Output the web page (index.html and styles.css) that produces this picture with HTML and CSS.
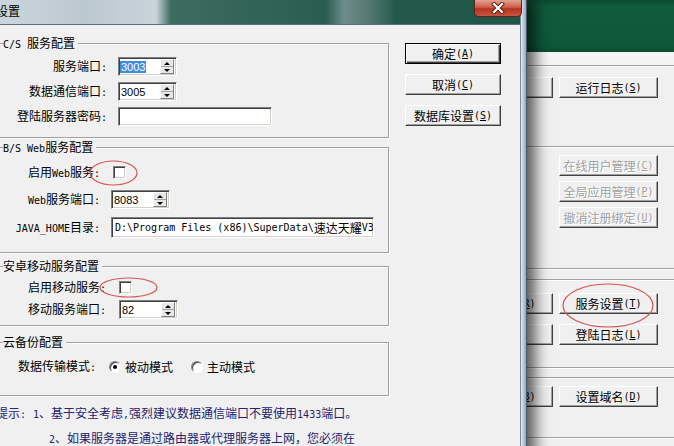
FILE: index.html
```html
<!DOCTYPE html>
<html lang="zh-CN">
<head>
    <meta charset="UTF-8">
    <meta name="viewport" content="width=device-width, initial-scale=1.0">
    <title>设置</title>
    <link rel="stylesheet" href="styles.css">
</head>
<body>
    <!-- main window, mostly hidden behind the dialog -->
    <div class="main-window">
        <div class="main-header"></div>
        <div class="main-strip"></div>

        <div class="panel panel-run">
            <div class="btn-row">
                <div class="btn btn-left">启动<span class="en">(<u>R</u>)</span></div>
                <div class="btn">运行日志<span class="en">(<u>S</u>)</span></div>
            </div>
        </div>

        <div class="panel panel-admin">
            <div class="btn-stack">
                <div class="btn disabled">在线用户管理<span class="en">(<u>C</u>)</span></div>
                <div class="btn disabled">全局应用管理<span class="en">(<u>P</u>)</span></div>
                <div class="btn disabled">撤消注册绑定<span class="en">(<u>U</u>)</span></div>
            </div>
        </div>

        <div class="panel panel-service">
            <div class="btn-col">
                <div class="btn-row">
                    <div class="btn btn-left">启动服务<span class="en">(<u>R</u>)</span></div>
                    <div class="btn">服务设置<span class="en">(<u>T</u>)</span></div>
                </div>
                <div class="btn-row">
                    <div class="btn btn-left">备份<span class="en">(<u>K</u>)</span></div>
                    <div class="btn">登陆日志<span class="en">(<u>L</u>)</span></div>
                </div>
            </div>
        </div>

        <div class="panel panel-domain">
            <div class="btn-row">
                <div class="btn btn-left">数据备份<span class="en">(<u>B</u>)</span></div>
                <div class="btn">设置域名<span class="en">(<u>D</u>)</span></div>
            </div>
        </div>
    </div>

    <!-- settings dialog -->
    <div class="dialog">
        <div class="dialog-main">
            <div class="titlebar">
                <span class="title">设置</span>
                <div class="close-btn">
                    <svg width="14" height="12" viewBox="0 0 14 12">
                        <path d="M3 2 L11 10 M11 2 L3 10" stroke="#5a1a10" stroke-width="4" stroke-linecap="square"/>
                        <path d="M3 2 L11 10 M11 2 L3 10" stroke="#fff" stroke-width="2.2" stroke-linecap="square"/>
                    </svg>
                </div>
            </div>

            <div class="client">
                <div class="settings">
                    <div class="group group-cs">
                        <div class="group-title"><span class="en">C/S </span>服务配置</div>
                        <div class="row">
                            <span class="label">服务端口<span class="en">:</span></span>
                            <span class="field field-port"><span class="sel">3003</span><span class="spin"><i class="up"></i><i class="down"></i></span></span>
                        </div>
                        <div class="row">
                            <span class="label">数据通信端口<span class="en">:</span></span>
                            <span class="field field-port">3005<span class="spin"><i class="up"></i><i class="down"></i></span></span>
                        </div>
                        <div class="row">
                            <span class="label">登陆服务器密码<span class="en">:</span></span>
                            <span class="field field-pass"></span>
                        </div>
                    </div>

                    <div class="group group-bs">
                        <div class="group-title"><span class="en">B/S Web</span>服务配置</div>
                        <div class="row row-check">
                            <span class="label">启用<span class="en">Web</span>服务<span class="en">:</span></span>
                            <span class="checkbox"></span>
                        </div>
                        <div class="row">
                            <span class="label"><span class="en">Web</span>服务端口<span class="en">:</span></span>
                            <span class="field field-port">8083<span class="spin"><i class="up"></i><i class="down"></i></span></span>
                        </div>
                        <div class="row">
                            <span class="label"><span class="en">JAVA_HOME</span>目录<span class="en">:</span></span>
                            <span class="field field-path"><span class="en">D:\Program Files (x86)\SuperData\</span>速达天耀<span class="en">V3</span></span>
                        </div>
                    </div>

                    <div class="group group-mobile">
                        <div class="group-title">安卓移动服务配置</div>
                        <div class="row row-check">
                            <span class="label">启用移动服务<span class="en">:</span></span>
                            <span class="checkbox"></span>
                        </div>
                        <div class="row">
                            <span class="label">移动服务端口<span class="en">:</span></span>
                            <span class="field field-port">82<span class="spin"><i class="up"></i><i class="down"></i></span></span>
                        </div>
                    </div>

                    <div class="group group-cloud">
                        <div class="group-title">云备份配置</div>
                        <div class="row row-radio">
                            <span class="label">数据传输模式<span class="en">:</span></span>
                            <span class="radio checked"></span><span class="radio-text">被动模式</span>
                            <span class="radio"></span><span class="radio-text">主动模式</span>
                        </div>
                    </div>

                    <div class="hint">
                        <div class="hint-row">
                            <span class="hint-label">提示<span class="en">:</span></span>
                            <span><span class="en">1</span>、基于安全考虑<span class="en">,</span>强烈建议数据通信端口不要使用<span class="en">1433</span>端口。</span>
                        </div>
                        <div class="hint-more">
                            <div><span class="en">2</span>、如果服务器是通过路由器或代理服务器上网，您必须在</div>
                            <div>路由器或代理服务器上开放以上服务端口。</div>
                        </div>
                    </div>
                </div>

                <div class="actions">
                    <div class="btn btn-default">确定<span class="en">(<u>A</u>)</span></div>
                    <div class="btn">取消<span class="en">(<u>C</u>)</span></div>
                    <div class="btn">数据库设置<span class="en">(<u>S</u>)</span></div>
                </div>
            </div>
        </div>
        <div class="frame"></div>
    </div>

    <!-- red marks drawn over the screenshot -->
    <svg class="marks" width="674" height="446" viewBox="0 0 674 446">
        <ellipse cx="113.5" cy="173" rx="23.5" ry="12" />
        <ellipse cx="128.5" cy="287.5" rx="28.5" ry="9.5" />
        <ellipse cx="608" cy="305.5" rx="45" ry="21.5" />
    </svg>
</body>
</html>
```

FILE: styles.css
```css
/* Classic Windows look: settings dialog over the server main window */
* {
    box-sizing: border-box;
}
body {
    margin: 0;
    width: 674px;
    height: 446px;
    overflow: hidden;
    position: relative;
    background-color: #f0f0f0;
    font-family: "Noto Sans CJK SC", sans-serif;
    font-size: 12px;
    color: #000;
}
.en {
    font-family: "DejaVu Sans Mono", monospace;
    font-size: 10px;
}
u {
    text-underline-offset: 1px;
}

/* --- main window --- */
.main-window {
    position: absolute;
    left: 400px;
    top: 0;
    width: 280px;
    height: 446px;
    display: flex;
    flex-direction: column;
    background-color: #f0f0f0;
}
.main-header {
    flex: none;
    height: 52px;
    background: linear-gradient(#0a4a30, #0f5b3b 12%, #0e593a 85%, #0b4c31);
}
.main-strip {
    flex: none;
    height: 14px;
    background-color: #f4f4f4;
    border-bottom: 1px solid #a0a0a0;
    box-shadow: 0 1px 0 #fff;
}
.panel {
    flex: none;
    border-bottom: 1px solid #a0a0a0;
    box-shadow: 0 1px 0 #fff;
}
.panel-run {
    height: 81px;
    padding-top: 11px;
}
.panel-admin {
    height: 122px;
    padding-top: 8px;
}
.panel-service {
    margin-top: 10px;
    height: 89px;
    padding-top: 13px;
    border-top: 1px solid #a0a0a0;
    box-shadow: inset 0 1px 0 #fff, 0 1px 0 #fff;
}
.panel-domain {
    margin-top: 9px;
    height: 61px;
    padding-top: 8px;
    border-top: 1px solid #a0a0a0;
    box-shadow: inset 0 1px 0 #fff, 0 1px 0 #fff;
}

/* --- buttons --- */
.btn {
    height: 21px;
    display: flex;
    align-items: center;
    justify-content: center;
    white-space: nowrap;
    line-height: 14px;
    background-color: #f0f0f0;
    border: 1px solid;
    border-color: #fff #404040 #404040 #fff;
    box-shadow: inset -1px -1px 0 #a0a0a0;
}
.btn.disabled {
    color: #a0a0a0;
    text-shadow: 1px 1px 0 #fff;
}
.btn-default {
    border-color: #000;
    box-shadow: inset 1px 1px 0 #fff, inset -1px -1px 0 #404040, inset -2px -2px 0 #a0a0a0;
}
.btn-row {
    display: flex;
    gap: 6px;
    padding-left: 52px;
}
.btn-row .btn {
    width: 99px;
}
.btn-row .btn-left {
    width: 101px;
}
.btn-stack {
    display: flex;
    flex-direction: column;
    gap: 5px;
    padding-left: 159px;
}
.btn-stack .btn {
    width: 99px;
}
.btn-col {
    display: flex;
    flex-direction: column;
    gap: 10px;
}

/* --- dialog --- */
.dialog {
    position: absolute;
    left: -14px;
    top: 0;
    width: 541px;
    height: 470px;
    display: flex;
    z-index: 1;
    box-shadow: 6px 0 14px 2px rgba(0, 0, 0, 0.65);
}
.dialog-main {
    flex: 1;
    display: flex;
    flex-direction: column;
}
.frame {
    flex: none;
    width: 7px;
    background: linear-gradient(to right, #e2e9f0, #b3c5d7 55%, #91a7be);
    border-left: 1px solid #7d8c99;
    border-right: 1px solid #4d5b68;
}
.titlebar {
    flex: none;
    height: 25px;
    display: flex;
    align-items: flex-start;
    border-bottom: 1px solid #5f6e79;
    background: linear-gradient(to right, #cdd7de 0, #bcc8d0 100px, #c9d3da 170px, #3d6b60 185px, #2a5d50 340px, #6e8d8b 358px, #587b76 380px, #24594b 410px, #1f5647 100%);
}
.title {
    padding: 4px 0 0 10px;
    line-height: 14px;
}
.close-btn {
    margin-left: auto;
    margin-right: -2px;
    position: relative;
    z-index: 2;
    width: 48px;
    height: 17px;
    display: flex;
    align-items: center;
    justify-content: center;
    border: 1px solid #5b2218;
    border-top: none;
    border-radius: 0 0 5px 5px;
    background: linear-gradient(#e3a392, #cc5e48 45%, #b5341f 55%, #c9553d);
}
.client {
    flex: 1;
    display: flex;
    padding-left: 9px;
    background-color: #f0f0f0;
}
.settings {
    flex: none;
    width: 394px;
}
.actions {
    flex: none;
    width: 96px;
    margin-left: 16px;
    padding-top: 18px;
    display: flex;
    flex-direction: column;
    gap: 10px;
}

/* --- group boxes --- */
.group {
    border: 1px solid #a0a0a0;
    box-shadow: inset 1px 1px 0 #fff, 1px 1px 0 #fff;
}
.group-title {
    width: max-content;
    height: 14px;
    margin: -8px 0 0 7px;
    padding-right: 3px;
    line-height: 14px;
    background-color: #f0f0f0;
}
.group-cs {
    margin-top: 18px;
    padding-bottom: 11px;
}
.group-bs {
    margin-top: 9px;
    padding-bottom: 14px;
}
.group-mobile {
    margin-top: 13px;
    padding-bottom: 6px;
}
.group-cloud {
    margin-top: 16px;
    padding-bottom: 20px;
}

.row {
    display: flex;
    align-items: center;
    margin-top: 6px;
}
.label {
    flex: none;
    text-align: right;
    white-space: nowrap;
    line-height: 14px;
}
.group-cs .row { gap: 11px; }
.group-cs .label { width: 111px; }
.group-cs .row:nth-child(2) { margin-top: 7px; }

.group-bs .row { gap: 11px; margin-top: 8px; }
.group-bs .label { width: 104px; }
.group-bs .row-check { margin-top: 9px; height: 19px; }
.group-bs .checkbox { margin-left: 2px; }

.group-mobile .row { gap: 13px; margin-top: 6px; }
.group-mobile .label { width: 110px; }
.group-mobile .row-check { margin-top: 8px; height: 13px; }

.group-cloud .label { width: 100px; }
.row-radio {
    margin-top: 10px;
    height: 16px;
}

/* --- inputs --- */
.field {
    flex: none;
    height: 19px;
    display: flex;
    align-items: center;
    padding-left: 2px;
    background-color: #fff;
    border: 1px solid;
    border-color: #808080 #fff #fff #808080;
    box-shadow: inset 1px 1px 0 #404040, inset -1px -1px 0 #d4d0c8;
    font-family: "Liberation Sans", sans-serif;
    font-size: 11px;
    white-space: nowrap;
    overflow: hidden;
}
.field-port { width: 59px; }
.field-pass { width: 154px; }
.field-path {
    width: 263px;
    height: 21px;
    padding-left: 3px;
    font-family: "Noto Sans CJK SC", sans-serif;
    font-size: 12px;
}
.sel {
    background-color: #3d8ee0;
    color: #fff;
    padding: 0 1px;
    margin-left: -1px;
}
.spin {
    margin-left: auto;
    margin-right: 2px;
    width: 14px;
    height: 15px;
    display: flex;
    flex-direction: column;
    background-color: #e8e8e8;
    border: 1px solid;
    border-color: #fff #808080 #808080 #fff;
}
.spin i {
    flex: 1;
    display: flex;
    align-items: center;
    justify-content: center;
}
.spin .up {
    border-bottom: 1px solid #a0a0a0;
}
.spin .up::after {
    content: "";
    border-left: 3px solid transparent;
    border-right: 3px solid transparent;
    border-bottom: 3px solid #000;
}
.spin .down::after {
    content: "";
    border-left: 3px solid transparent;
    border-right: 3px solid transparent;
    border-top: 3px solid #000;
}
.checkbox {
    flex: none;
    width: 13px;
    height: 13px;
    background-color: #fff;
    border: 1px solid;
    border-color: #808080 #fff #fff #808080;
    box-shadow: inset 1px 1px 0 #404040, inset -1px -1px 0 #d4d0c8;
}
.radio {
    flex: none;
    position: relative;
    width: 12px;
    height: 12px;
    margin-left: 18px;
    border-radius: 50%;
    background-color: #fff;
    border: 1px solid;
    border-color: #808080 #fff #fff #808080;
    box-shadow: inset 1px 1px 0 #404040;
}
.group-cloud .label + .radio {
    margin-left: 13px;
}
.radio.checked::after {
    content: "";
    position: absolute;
    left: 3px;
    top: 3px;
    width: 4px;
    height: 4px;
    border-radius: 50%;
    background-color: #000;
}
.radio-text {
    margin-left: 4px;
    line-height: 14px;
}

/* --- hint text --- */
.hint {
    margin-top: 9px;
    padding-left: 1px;
    color: #23236f;
}
.hint-row {
    display: flex;
    line-height: 16px;
}
.hint-label {
    flex: none;
    width: 37px;
}
.hint-more {
    margin-top: 8px;
    padding-left: 53px;
    line-height: 14px;
}

/* red ellipses marked on the shot */
.marks {
    position: absolute;
    left: 0;
    top: 0;
    z-index: 3;
    pointer-events: none;
}
.marks ellipse {
    fill: none;
    stroke: #d9534f;
    stroke-width: 1.2;
}
```
